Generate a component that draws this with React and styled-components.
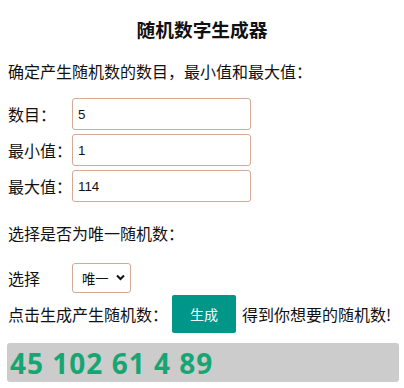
import React, { useState } from 'react';
import styled, { createGlobalStyle } from 'styled-components';

const GlobalStyle = createGlobalStyle`
  html, body {
    margin: 0;
    padding: 0;
    background: #fff;
  }
  body {
    font-family: "Noto Sans CJK SC", "Noto Sans", sans-serif;
    font-size: 16px;
    color: #111;
  }
`;

const Page = styled.div`
  padding: 0 8px;
  display: flex;
  flex-direction: column;
`;

const Title = styled.h3`
  margin: 16px 0 0;
  font-size: 18.72px;
  line-height: 26px;
  font-weight: 700;
  text-align: center;
`;

const Text = styled.p`
  margin: ${p => p.top || 0}px 0 0;
  line-height: 24px;
`;

const Rows = styled.div`
  display: flex;
  flex-direction: column;
  gap: 4px;
  margin-top: ${p => p.top || 0}px;
`;

const Row = styled.div`
  display: flex;
  align-items: center;
  margin-top: ${p => p.top || 0}px;
`;

const Label = styled.label`
  width: 64px;
  flex-shrink: 0;
  line-height: 24px;
`;

const Input = styled.input`
  box-sizing: border-box;
  width: 179px;
  height: 32px;
  margin: 0;
  padding: 0 5px;
  border: 1px solid #d3aa95;
  border-radius: 3px;
  font-family: "Liberation Sans", Arial, sans-serif;
  font-size: 13.33px;
  color: #111;
  outline: none;
`;

const SelectWrap = styled.div`
  position: relative;
  width: 59px;
  height: 30px;
`;

const Select = styled.select`
  box-sizing: border-box;
  appearance: none;
  width: 100%;
  height: 100%;
  margin: 0;
  padding: 0 0 0 9px;
  border: 1px solid #d3aa95;
  border-radius: 3px;
  background: #fff;
  font-family: "Noto Sans CJK SC", sans-serif;
  font-size: 13.33px;
  color: #111;
  outline: none;
`;

const Chevron = styled.svg`
  position: absolute;
  right: 6px;
  top: 11px;
  width: 9px;
  height: 7px;
  pointer-events: none;
`;

const Button = styled.button`
  width: 64px;
  height: 38px;
  margin: 0 6px 0 4px;
  padding: 0;
  border: none;
  border-radius: 2px;
  background: #009688;
  color: #fff;
  font-family: "Noto Sans CJK SC", sans-serif;
  font-size: 14px;
  cursor: pointer;
`;

const Result = styled.div`
  box-sizing: border-box;
  margin: 10px 0 0 -1px;
  width: 392px;
  height: 39px;
  padding-left: 3px;
  background: #cccccc;
  border-radius: 3px;
  display: flex;
  align-items: center;
  font-family: "Noto Sans", "Open Sans", sans-serif;
  font-weight: 700;
  font-size: 28px;
  letter-spacing: 1px;
  color: #17a673;
`;

const App = () => {
  const [count, setCount] = useState('5');
  const [min, setMin] = useState('1');
  const [max, setMax] = useState('114');
  const [unique, setUnique] = useState('unique');
  const [nums, setNums] = useState([45, 102, 61, 4, 89]);

  const generate = () => {
    const n = parseInt(count, 10) || 0;
    const lo = parseInt(min, 10) || 0;
    const hi = parseInt(max, 10) || 0;
    const out = [];
    let guard = 0;
    while (out.length < n && guard < 10000) {
      guard++;
      const v = lo + Math.floor(Math.random() * (hi - lo + 1));
      if (unique === 'unique' && out.includes(v)) continue;
      out.push(v);
    }
    setNums(out);
  };

  return (
    <Page>
      <GlobalStyle />
      <Title>随机数字生成器</Title>
      <Text top={17}>确定产生随机数的数目，最小值和最大值：</Text>
      <Rows top={15}>
        <Row>
          <Label>数目：</Label>
          <Input value={count} onChange={e => setCount(e.target.value)} />
        </Row>
        <Row>
          <Label>最小值：</Label>
          <Input value={min} onChange={e => setMin(e.target.value)} />
        </Row>
        <Row>
          <Label>最大值：</Label>
          <Input value={max} onChange={e => setMax(e.target.value)} />
        </Row>
      </Rows>
      <Text top={19}>选择是否为唯一随机数：</Text>
      <Row top={18}>
        <Label>选择</Label>
        <SelectWrap>
          <Select value={unique} onChange={e => setUnique(e.target.value)}>
            <option value="unique">唯一</option>
            <option value="repeat">可重复</option>
          </Select>
          <Chevron viewBox="0 0 9 7">
            <path d="M1 1.5 L4.5 5 L8 1.5" fill="none" stroke="#111" strokeWidth="2" />
          </Chevron>
        </SelectWrap>
      </Row>
      <Row top={2}>
        <span>点击生成产生随机数：</span>
        <Button onClick={generate}>生成</Button>
        <span>得到你想要的随机数!</span>
      </Row>
      <Result>{nums.join(' ')}</Result>
    </Page>
  );
};

export default App;
